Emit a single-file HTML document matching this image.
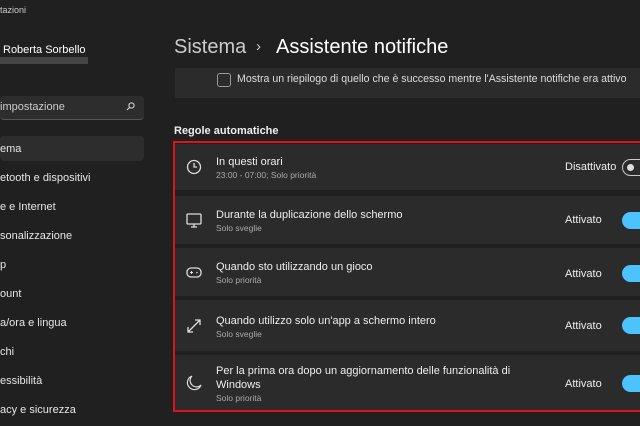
<!DOCTYPE html><html><head><style>
body{margin:0;width:640px;height:426px;background:#202020;font-family:"Liberation Sans",sans-serif;color:#fff;position:relative;overflow:hidden}
.a{position:absolute;white-space:nowrap}
.nav{font-size:11px;color:#e6e6e6;left:0}
.card{position:absolute;left:175px;width:470px;background:#2b2b2b}
.t{position:absolute;left:41px;font-size:11px;color:#eee}
.s{position:absolute;left:41px;font-size:8.5px;color:#aaa}
.st{position:absolute;left:390px;font-size:11px;color:#eee}
.tg{position:absolute;left:447px;width:40px;height:17px;border-radius:9px;background:#4cc2ff}
.ic{position:absolute;left:10px;width:18px;height:18px}
</style></head><body>
<div class="a" style="left:0;top:5px;font-size:9px;color:#ccc">tazioni</div>
<div class="a" style="left:3px;top:44px;font-size:11px;color:#fff">Roberta Sorbello</div>
<div class="a" style="left:0;top:57px;width:88px;height:7px;background:#444"></div>
<div class="a" style="left:0;top:96px;width:144px;height:23px;background:#2d2d2d;border-radius:4px;border-bottom:1px solid #555"></div>
<div class="a" style="left:0;top:101px;font-size:11px;color:#ccc">impostazione</div>
<svg class="a" style="left:126px;top:102px" width="9" height="9" viewBox="0 0 9 9"><circle cx="5.5" cy="3.5" r="2.6" fill="none" stroke="#ddd" stroke-width="1"/><path d="M3.6 5.4L1 8" stroke="#ddd" stroke-width="1.1"/></svg>
<div class="a" style="left:0;top:136px;width:144px;height:25px;background:#2d2d2d;border-radius:4px"></div>
<div class="a nav" style="top:143px">ema</div>
<div class="a nav" style="top:172px">etooth e dispositivi</div>
<div class="a nav" style="top:201px">e e Internet</div>
<div class="a nav" style="top:230px">sonalizzazione</div>
<div class="a nav" style="top:259px">p</div>
<div class="a nav" style="top:288px">ount</div>
<div class="a nav" style="top:317px">a/ora e lingua</div>
<div class="a nav" style="top:346px">chi</div>
<div class="a nav" style="top:375px">essibilità</div>
<div class="a nav" style="top:404px">acy e sicurezza</div>
<div class="a" style="left:174px;top:36px;font-size:20px;color:#ccc">Sistema</div>
<div class="a" style="left:256px;top:38px;font-size:15px;color:#ccc">›</div>
<div class="a" style="left:276px;top:36px;font-size:20px;color:#fff">Assistente notifiche</div>
<div class="card" style="top:68px;height:30px;background:#2b2b2b"></div>
<div class="a" style="left:217px;top:73px;width:12px;height:12px;border:1px solid #999;border-radius:3px"></div>
<div class="a" style="left:237px;top:73px;font-size:10.6px;color:#ddd">Mostra un riepilogo di quello che è successo mentre l'Assistente notifiche era attivo</div>
<div class="a" style="left:174px;top:125px;font-size:11px;color:#eee;font-weight:bold">Regole automatiche</div>
<div class="a" style="left:173px;top:141px;width:480px;height:271px;border:2px solid #e0121a;box-sizing:border-box;z-index:5"></div>
<div class="card" style="top:144px;height:46px">
<svg class="ic" style="top:14px" viewBox="0 0 18 18"><circle cx="9" cy="9" r="6.5" fill="none" stroke="#ddd" stroke-width="1.3"/><path d="M9 5v4h3" fill="none" stroke="#ddd" stroke-width="1.3"/></svg>
<div class="t" style="top:12px">In questi orari</div><div class="s" style="top:26px">23:00 - 07:00; Solo priorità</div>
<div class="st" style="top:17px">Disattivato</div>
<div class="tg" style="top:15px;background:none;border:1px solid #ccc;box-sizing:border-box"><div style="position:absolute;left:4px;top:4px;width:7px;height:7px;border-radius:50%;background:#ddd"></div></div></div>
<div class="card" style="top:196px;height:48px">
<svg class="ic" style="top:15px" viewBox="0 0 18 18"><rect x="2" y="3" width="14" height="10" rx="1" fill="none" stroke="#ddd" stroke-width="1.3"/><path d="M6 16h6M9 13v3" stroke="#ddd" stroke-width="1.3"/></svg>
<div class="t" style="top:13px">Durante la duplicazione dello schermo</div><div class="s" style="top:27px">Solo sveglie</div>
<div class="st" style="top:18px">Attivato</div><div class="tg" style="top:16px"></div></div>
<div class="card" style="top:248px;height:48px">
<svg class="ic" style="top:15px" viewBox="0 0 18 18"><rect x="2" y="5" width="14" height="9" rx="4" fill="none" stroke="#ddd" stroke-width="1.3"/><path d="M5 9.5h3M6.5 8v3" stroke="#ddd" stroke-width="1.1"/><circle cx="12" cy="9.5" r=".8" fill="#ddd"/></svg>
<div class="t" style="top:13px">Quando sto utilizzando un gioco</div><div class="s" style="top:27px">Solo priorità</div>
<div class="st" style="top:20px">Attivato</div><div class="tg" style="top:17px"></div></div>
<div class="card" style="top:300px;height:51px">
<svg class="ic" style="top:17px" viewBox="0 0 18 18"><path d="M3 15L15 3M10 3h5v5M3 10v5h5" fill="none" stroke="#ddd" stroke-width="1.3"/></svg>
<div class="t" style="top:15px">Quando utilizzo solo un'app a schermo intero</div><div class="s" style="top:29px">Solo sveglie</div>
<div class="st" style="top:20px">Attivato</div><div class="tg" style="top:17px"></div></div>
<div class="card" style="top:355px;height:56px">
<svg class="ic" style="top:19px" viewBox="0 0 18 18"><path d="M7 2a7 7 0 1 0 9 9A6 6 0 0 1 7 2z" fill="none" stroke="#ddd" stroke-width="1.2"/></svg>
<div class="t" style="top:10px">Per la prima ora dopo un aggiornamento delle funzionalità di</div>
<div class="t" style="top:24px">Windows</div><div class="s" style="top:38px">Solo priorità</div>
<div class="st" style="top:23px">Attivato</div><div class="tg" style="top:20px"></div></div>
</body></html>
